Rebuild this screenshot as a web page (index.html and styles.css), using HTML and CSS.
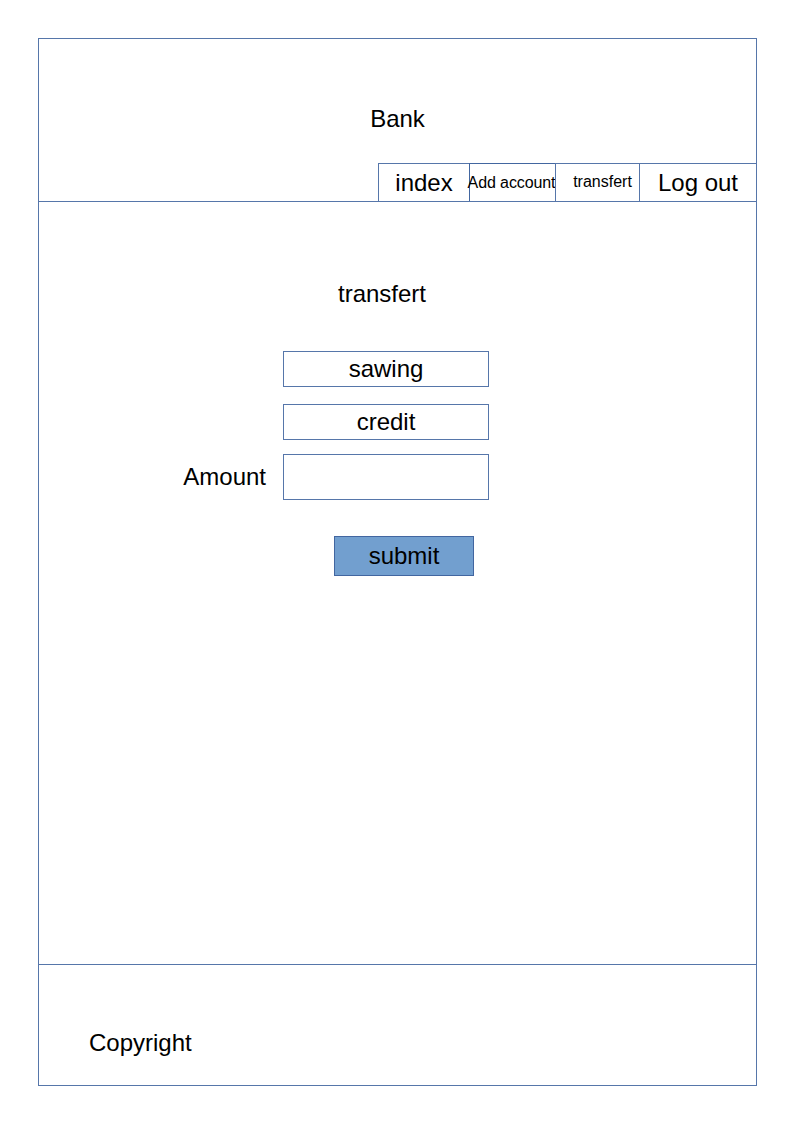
FILE: index.html
```html
<!DOCTYPE html>
<html>
<head>
<meta charset="utf-8">
<title>Bank - transfert</title>
<link rel="stylesheet" href="styles.css">
</head>
<body>
<div class="frame">
  <header class="header">
    <div class="brand">Bank</div>
    <nav class="nav">
      <a class="nav-item nav-index">index</a>
      <a class="nav-item nav-add">Add account</a>
      <a class="nav-item nav-transfer">transfert</a>
      <a class="nav-item nav-logout">Log out</a>
    </nav>
  </header>
  <main class="main">
    <h1 class="title">transfert</h1>
    <div class="form">
      <div class="row row-first">
        <span class="label"></span>
        <div class="field">sawing</div>
      </div>
      <div class="row row-second">
        <span class="label"></span>
        <div class="field">credit</div>
      </div>
      <div class="row row-amount">
        <span class="label">Amount</span>
        <div class="field field-tall"></div>
      </div>
      <div class="actions">
        <button class="submit" type="button">submit</button>
      </div>
    </div>
  </main>
  <footer class="footer">
    <span class="copyright">Copyright</span>
  </footer>
</div>
</body>
</html>
```

FILE: styles.css
```css
* {
  box-sizing: border-box;
}

html, body {
  margin: 0;
  padding: 0;
  background: #ffffff;
}

body {
  font-family: "Liberation Sans", Arial, sans-serif;
  color: #000000;
  padding: 38px 0 0 38px;
}

.frame {
  width: 719px;
  border: 1px solid #5676aa;
  display: flex;
  flex-direction: column;
}

.header {
  height: 163px;
  border-bottom: 1px solid #5676aa;
  display: flex;
  flex-direction: column;
}

.brand {
  padding-top: 66px;
  font-size: 24px;
  line-height: 28px;
  text-align: center;
}

.nav {
  margin-top: auto;
  display: flex;
  justify-content: flex-end;
  height: 38px;
}

.nav-item {
  display: flex;
  align-items: center;
  justify-content: center;
  height: 38px;
  border-top: 1px solid #5676aa;
  border-left: 1px solid #5676aa;
  color: #000000;
  text-decoration: none;
  white-space: nowrap;
  line-height: 1;
}

.nav-index {
  width: 91px;
  font-size: 24px;
  padding-top: 1px;
}

.nav-add {
  width: 87px;
  font-size: 16px;
  border-color: #4266a0;
  border-right: 1px solid #4266a0;
  margin-right: -1px;
  letter-spacing: -0.1px;
  padding-right: 2px;
}

.nav-transfer {
  width: 84px;
  font-size: 16px;
  padding-bottom: 2px;
  padding-left: 10px;
}

.nav-logout {
  width: 117px;
  font-size: 24px;
  padding-top: 1px;
}

.main {
  height: 762px;
  padding-top: 78px;
}

.title {
  margin: 0;
  padding-left: 299px;
  font-size: 24px;
  font-weight: normal;
  line-height: 28px;
}

.form {
  margin-top: 43px;
  display: flex;
  flex-direction: column;
}

.row {
  display: grid;
  grid-template-columns: 244px 206px;
  align-items: center;
}

.row-second {
  margin-top: 17px;
}

.row-amount {
  margin-top: 14px;
}

.label {
  font-size: 24px;
  line-height: 28px;
  text-align: right;
  padding-right: 17px;
}

.field {
  height: 36px;
  border: 1px solid #5676aa;
  display: flex;
  align-items: center;
  justify-content: center;
  font-size: 24px;
  line-height: 1;
}

.field-tall {
  height: 46px;
}

.actions {
  margin-top: 36px;
  padding-left: 295px;
}

.submit {
  width: 140px;
  height: 40px;
  margin: 0;
  padding: 0;
  background: #729fcf;
  border: 1px solid #4266a0;
  border-radius: 0;
  font-family: "Liberation Sans", Arial, sans-serif;
  font-size: 24px;
  color: #000000;
  line-height: 1;
}

.footer {
  height: 121px;
  border-top: 1px solid #5676aa;
  padding: 64px 0 0 50px;
}

.copyright {
  font-size: 24px;
  line-height: 28px;
}
```
